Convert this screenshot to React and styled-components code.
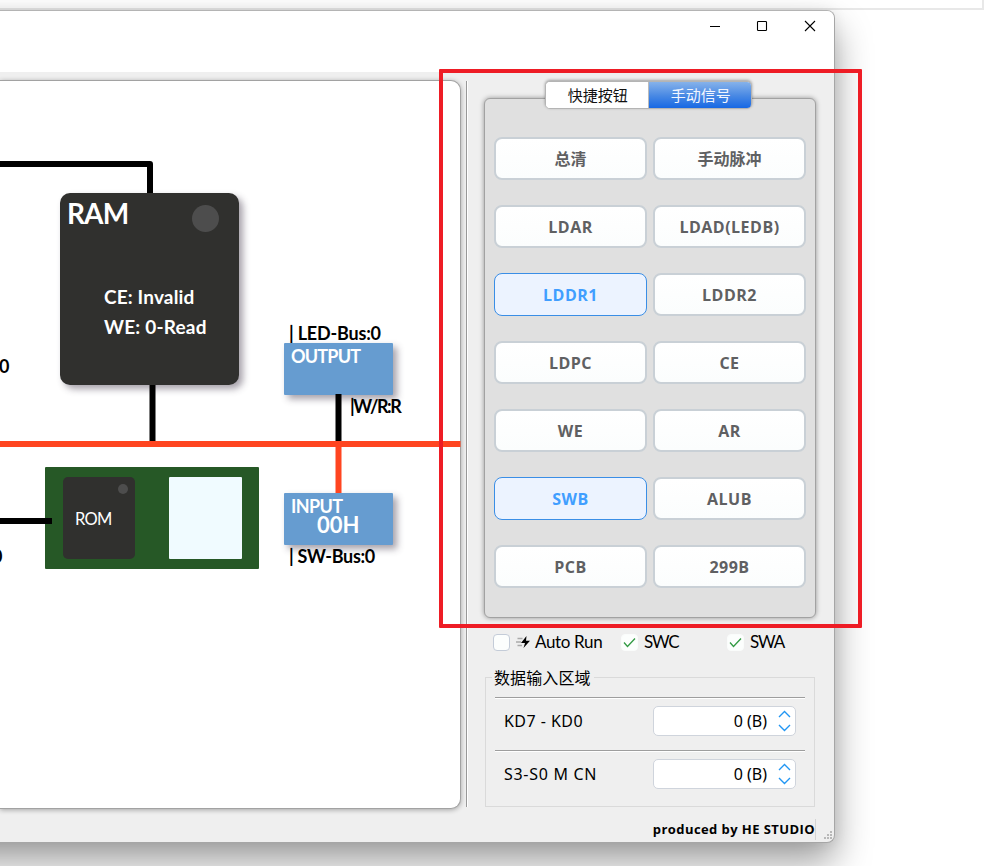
import React from "react";
import styled, { createGlobalStyle, css } from "styled-components";

const GlobalStyle = createGlobalStyle`
  * { box-sizing: border-box; }
  html, body { margin: 0; padding: 0; background: #fff; overflow: hidden; }
  body { font-family: "Noto Sans", "Noto Sans CJK SC", sans-serif; color: #000; }
`;

const Desktop = styled.div`
  position: relative;
  width: 985px;
  height: 866px;
  overflow: hidden;
  background: #fff;
`;

const BackWindow = styled.div`
  width: 984px;
  height: 10px;
  border-right: 2px solid #e8e8e8;
  border-bottom: 2px solid #e8e8e8;
`;

const Window = styled.div`
  display: flex;
  flex-direction: column;
  width: 1035px;
  height: 833px;
  margin-left: -200px;
  border: 1px solid #a6a6a6;
  border-top-color: #b4b4b4;
  border-radius: 8px;
  background: #efefef;
  box-shadow: 0 19px 36px rgba(0, 0, 0, 0.38), 0 0 14px rgba(0, 0, 0, 0.07);
  overflow: hidden;
  flex-shrink: 0;
`;

const TitleBar = styled.div`
  display: flex;
  justify-content: flex-end;
  height: 61px;
  background: #fff;
`;

const CaptionButton = styled.div`
  display: flex;
  align-items: center;
  justify-content: center;
  width: ${(p) => p.$w || 48}px;
  height: 30px;
`;

const Body = styled.div`
  display: flex;
  height: 770px;
  padding: 8px 0 0 199px;
`;

const Canvas = styled.div`
  position: relative;
  width: 461px;
  height: 729px;
  border: 1px solid #a2a2a2;
  border-left: 0;
  border-radius: 0 10px 10px 0;
  background: #fff;
  box-shadow: 0 1px 5px rgba(0, 0, 0, 0.32);
`;

const Wires = styled.svg`
  position: absolute;
  left: 0;
  top: -1px;
  display: block;
`;

const Node = styled.div`
  position: absolute;
  left: ${(p) => p.$x}px;
  top: ${(p) => p.$y}px;
  width: ${(p) => p.$w}px;
  height: ${(p) => p.$h}px;
  border-radius: ${(p) => p.$r || 1}px;
  background: ${(p) => p.$bg};
  ${(p) => p.$shadow && css`box-shadow: 4px 4px 7px rgba(60, 50, 70, 0.46);`}
`;

const Lamp = styled.div`
  position: absolute;
  left: ${(p) => p.$x}px;
  top: ${(p) => p.$y}px;
  width: ${(p) => p.$d}px;
  height: ${(p) => p.$d}px;
  border-radius: 50%;
  background: #4d4d4d;
`;

const Label = styled.div`
  position: absolute;
  left: ${(p) => p.$x}px;
  top: ${(p) => p.$y}px;
  font-family: Lato, sans-serif;
  font-size: ${(p) => p.$size || 18}px;
  font-weight: ${(p) => p.$weight || 700};
  line-height: 30px;
  letter-spacing: ${(p) => p.$ls || 0}px;
  white-space: pre;
  color: ${(p) => p.$color || "#000"};
`;

const Splitter = styled.div`
  width: 2px;
  height: 726px;
  margin: 1px 0 0 5px;
  border-left: 1px solid #989898;
  border-right: 1px solid #fff;
`;

const Sidebar = styled.div`
  display: flex;
  flex-direction: column;
  width: 366px;
  padding-left: 16px;
`;

const TabBar = styled.div`
  position: relative;
  z-index: 1;
  display: flex;
  width: 207px;
  height: 28px;
  margin: 1px 0 0 61px;
  border: 1px solid #b4b4b4;
  border-radius: 5px;
  background: #fff;
  box-shadow: 0 -1px 3px rgba(0, 0, 0, 0.35);
  overflow: hidden;
`;

const Tab = styled.div`
  display: flex;
  align-items: center;
  justify-content: center;
  width: 103px;
  padding-left: 2px;
  font-size: 15px;
  line-height: 20px;
  color: ${(p) => (p.$active ? "#f2f6ff" : "#111")};
  background: ${(p) => (p.$active ? "linear-gradient(#86b2ea, #4687e4 55%, #1768e4)" : "#fff")};
  border-right: ${(p) => (p.$active ? "0" : "1px solid #bbb")};
`;

const SignalPanel = styled.div`
  width: 332px;
  height: 520px;
  margin-top: -11px;
  padding: 38px 9px 0;
  border: 1px solid #a2a2a2;
  border-radius: 6px;
  background: #e0e0e0;
  box-shadow: 0 0 5px rgba(0, 0, 0, 0.38);
`;

const SignalGrid = styled.div`
  display: grid;
  grid-template-columns: 153px 153px;
  grid-auto-rows: 43px;
  column-gap: 6px;
  row-gap: 25px;
`;

const SignalButton = styled.button`
  display: flex;
  align-items: center;
  justify-content: center;
  margin: 0;
  padding: ${(p) => (p.$han ? "0 0 1px" : "1px 0 0")};
  border: 2px solid #c9d0d6;
  border-radius: 8px;
  background: linear-gradient(#fff, #fbfdfd);
  color: #5f6062;
  font-family: "Open Sans", "Noto Sans CJK SC", sans-serif;
  font-size: 16px;
  font-weight: 700;
  letter-spacing: ${(p) => (p.$han ? 0 : 0.5)}px;
  ${(p) =>
    p.$on &&
    css`
      border: 1px solid #3a8ee6;
      background: #ecf3ff;
      color: #409eff;
    `}
`;

const CheckRow = styled.div`
  display: flex;
  align-items: center;
  height: 18px;
  margin: 15px 0 0 9px;
`;

const CheckItem = styled.div`
  display: flex;
  align-items: center;
  width: ${(p) => p.$w}px;
  font-family: Lato, sans-serif;
  font-size: 17px;
  line-height: 18px;
  letter-spacing: ${(p) => p.$ls || 0}px;
  white-space: nowrap;
`;

const CheckBox = styled.span`
  display: flex;
  align-items: center;
  justify-content: center;
  width: 17px;
  height: 17px;
  margin-right: 6px;
  border: 1px solid ${(p) => (p.$on ? "#fafcfb" : "#c4ccd8")};
  border-radius: 4px;
  background: #fcfefd;
`;

const CheckText = styled.span`
  margin-left: 5px;
`;

const DataGroup = styled.fieldset`
  width: 330px;
  height: 139px;
  margin: 17px 0 0 1px;
  padding: 11px 9px 0;
  border: 1px solid #dadada;
  min-width: 0;
`;

const Legend = styled.legend`
  height: 18px;
  margin-left: -3px;
  padding: 0 3px 0 2px;
  font-size: 16px;
  line-height: 20px;
  letter-spacing: 0.1px;
`;

const DataRow = styled.div`
  display: flex;
  align-items: flex-start;
  justify-content: space-between;
  height: 53px;
  padding: 8px 9px 0;
  border-top: 1px solid #9e9e9e;
  box-shadow: inset 0 1px 0 #fff;
`;

const DataLabel = styled.div`
  font-size: 16px;
  line-height: 30px;
  letter-spacing: ${(p) => p.$ls || 0}px;
`;

const SpinBox = styled.div`
  display: flex;
  align-items: center;
  justify-content: flex-end;
  gap: 11px;
  width: 143px;
  height: 30px;
  padding-right: 4px;
  border: 1px solid #cfd4dc;
  border-radius: 5px;
  background: #fff;
  font-size: 16px;
`;

const StatusBar = styled.div`
  display: flex;
  justify-content: flex-end;
  height: 21px;
  margin-top: 12px;
`;

const Credit = styled.div`
  height: 21px;
  border-right: 1px solid #d4d4d4;
  font-family: "Open Sans", sans-serif;
  font-size: 13px;
  font-weight: 700;
  line-height: 21px;
  letter-spacing: 0.42px;
  white-space: nowrap;
`;

const Grip = styled.svg`
  margin: 12px 2px 0 8px;
`;

const Highlight = styled.div`
  position: absolute;
  z-index: 5;
  left: 439px;
  top: 69px;
  width: 423px;
  height: 559px;
  border: 4px solid #ee1c25;
  border-radius: 1px;
`;

const signals = [
  "总清", "手动脉冲", "LDAR", "LDAD(LEDB)", "LDDR1", "LDDR2", "LDPC",
  "CE", "WE", "AR", "SWB", "ALUB", "PCB", "299B",
];
const activeSignals = ["LDDR1", "SWB"];
const isHan = (text) => /[\u4e00-\u9fff]/.test(text);

const Tick = () => (
  <svg width="13" height="11" viewBox="0 0 13 11" fill="none">
    <path d="M1 5.5 4.5 9.5 12 1.5" stroke="#329a43" strokeWidth="1.3" />
  </svg>
);

const RunIcon = () => (
  <svg width="14" height="12" viewBox="0 0 14 12">
    <path d="M1.500 2.500H6.500M0 6H5M1.500 9.500H6" stroke="#aaa" strokeWidth="1.4" />
    <path d="M10.500 0 5 7H9L7.500 12 14 4.800H10z" fill="#000" />
  </svg>
);

const Arrows = () => (
  <svg width="13" height="22" viewBox="0 0 13 22" fill="none" stroke="#2196f3" strokeWidth="1.4">
    <path d="M1 7 6.5 1.5 12 7M1 15 6.5 20.5 12 15" />
  </svg>
);

export default function App() {
  return (
    <>
      <GlobalStyle />
      <Desktop>
        <BackWindow />
        <Window>
          <TitleBar>
            <CaptionButton $w={46}>
              <svg width="12" height="12"><path d="M1 6.5h10" stroke="#000" /></svg>
            </CaptionButton>
            <CaptionButton>
              <svg width="12" height="12"><rect x="1.500" y="1.500" width="9" height="9" rx="0.800" fill="none" stroke="#000" strokeWidth="1.100" /></svg>
            </CaptionButton>
            <CaptionButton>
              <svg width="12" height="12"><path d="M1 1 11 11M11 1 1 11" stroke="#000" strokeWidth="1.1" /></svg>
            </CaptionButton>
          </TitleBar>
          <Body>
            <Canvas>
              <Node $x={60} $y={112} $w={179} $h={192} $r={10} $bg="#30302e" $shadow>
                <Label $x={7} $y={5} $size={28} $ls={-0.9} $color="#fff">RAM</Label>
                <Lamp $x={132} $y={12} $d={27} />
                <Label $x={44} $y={89} $size={19} $ls={0.15} $color="#fff">CE: Invalid</Label>
                <Label $x={44} $y={119} $size={19} $ls={0.2} $color="#fff">WE: 0-Read</Label>
              </Node>
              <Node $x={284} $y={262} $w={109} $h={52} $bg="#669cd0" $shadow>
                <Label $x={7} $y={-2} $ls={-0.8} $color="#fff">OUTPUT</Label>
              </Node>
              <Node $x={284} $y={412} $w={109} $h={52} $bg="#669cd0" $shadow>
                <Label $x={7} $y={-2} $ls={-0.6} $color="#fff">INPUT</Label>
                <Label $x={33} $y={17} $size={22} $color="#fff">00H</Label>
              </Node>
              <Node $x={45} $y={386} $w={214} $h={102} $bg="#265826">
                <Node $x={18} $y={10} $w={72} $h={82} $r={5} $bg="#30302e">
                  <Lamp $x={55} $y={7} $d={10} />
                  <Label $x={12} $y={27} $size={16.5} $weight={400} $ls={-0.7} $color="#fff">ROM</Label>
                </Node>
                <Node $x={124} $y={10} $w={73} $h={82} $bg="#f0fbff" />
              </Node>
              <Wires width="461" height="729" fill="none" strokeWidth="6">
                <path d="M0 84H150V113" stroke="#000" strokeLinejoin="round" />
                <path d="M152.500 305V361M338.500 314V361M0 441H52" stroke="#000" />
                <path d="M338.500 364V413M0 364H460.500" stroke="#ff4520" />
              </Wires>
              <Label $x={289} $y={237} $ls={-0.2}>| LED-Bus:0</Label>
              <Label $x={350} $y={310} $ls={-1.4}>|W/R:R</Label>
              <Label $x={289} $y={460} $ls={-0.3}>| SW-Bus:0</Label>
              <Label $x={-1} $y={270} $ls={-1}>0</Label>
              <Label $x={-8} $y={460}>0</Label>
            </Canvas>
            <Splitter />
            <Sidebar>
              <TabBar>
                <Tab>快捷按钮</Tab>
                <Tab $active>手动信号</Tab>
              </TabBar>
              <SignalPanel>
                <SignalGrid>
                  {signals.map((name) => (
                    <SignalButton key={name} $han={isHan(name)} $on={activeSignals.includes(name)}>{name}</SignalButton>
                  ))}
                </SignalGrid>
              </SignalPanel>
              <CheckRow>
                <CheckItem $w={128} $ls={-0.35}>
                  <CheckBox />
                  <RunIcon />
                  <CheckText>Auto Run</CheckText>
                </CheckItem>
                <CheckItem $w={106} $ls={-1.2}><CheckBox $on><Tick /></CheckBox>SWC</CheckItem>
                <CheckItem $w={80} $ls={-1.2}><CheckBox $on><Tick /></CheckBox>SWA</CheckItem>
              </CheckRow>
              <DataGroup>
                <Legend>数据输入区域</Legend>
                <DataRow>
                  <DataLabel $ls={0.45}>KD7 - KD0</DataLabel>
                  <SpinBox>0 (B)<Arrows /></SpinBox>
                </DataRow>
                <DataRow>
                  <DataLabel $ls={0.7}>S3-S0 M CN</DataLabel>
                  <SpinBox>0 (B)<Arrows /></SpinBox>
                </DataRow>
              </DataGroup>
              <StatusBar>
                <Credit>produced by HE STUDIO</Credit>
                <Grip width="8" height="9" fill="#b8b8b8">
                  <path d="M6 0h2v2H6zM3 3h2v2H3zM6 3h2v2H6zM0 6h2v2H0zM3 6h2v2H3zM6 6h2v2H6z" />
                </Grip>
              </StatusBar>
            </Sidebar>
          </Body>
        </Window>
        <Highlight />
      </Desktop>
    </>
  );
}
